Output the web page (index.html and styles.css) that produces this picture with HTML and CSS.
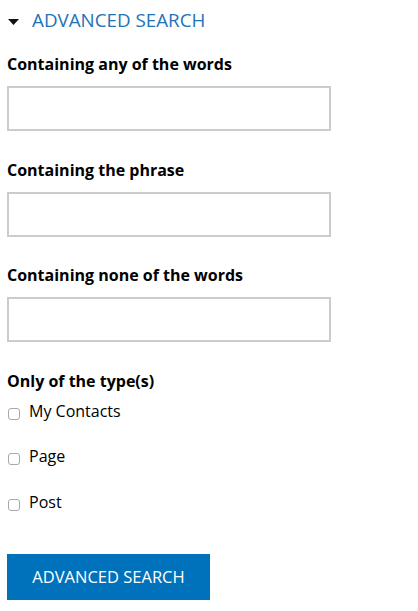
FILE: index.html
```html
<!DOCTYPE html>
<html lang="en">
<head>
<meta charset="utf-8">
<title>Advanced Search</title>
<link rel="stylesheet" href="styles.css">
</head>
<body>
<div class="panel">
  <div class="toggle">
    <svg class="caret" width="11" height="6" viewBox="0 0 11 6"><path d="M0 0H11L5.5 6Z" fill="#111"/></svg>
    <span class="toggle-text">ADVANCED SEARCH</span>
  </div>
  <form class="form">
    <label class="label">Containing any of the words</label>
    <input class="field" type="text">
    <label class="label">Containing the phrase</label>
    <input class="field" type="text">
    <label class="label">Containing none of the words</label>
    <input class="field" type="text">
    <div class="label types-label">Only of the type(s)</div>
    <label class="check"><input type="checkbox" class="box"><span>My Contacts</span></label>
    <label class="check"><input type="checkbox" class="box"><span>Page</span></label>
    <label class="check"><input type="checkbox" class="box"><span>Post</span></label>
    <button type="button" class="btn">ADVANCED SEARCH</button>
  </form>
</div>
</body>
</html>
```
FILE: styles.css
```css
html, body {
  margin: 0;
  padding: 0;
  background: #fff;
}
body {
  font-family: "Open Sans", "Liberation Sans", sans-serif;
  color: #000;
}
.panel {
  padding: 8px 0 0 7px;
}
.toggle {
  display: flex;
  align-items: center;
  height: 24px;
}
.caret {
  margin-left: 1px;
  margin-right: 13px;
  margin-top: 3px;
}
.toggle-text {
  font-size: 18.8px;
  line-height: 24px;
  color: #1f73b7;
}
.form {
  display: flex;
  flex-direction: column;
  align-items: flex-start;
  margin-top: 22px;
}
.label {
  font-size: 16px;
  font-weight: 700;
  line-height: 20px;
  margin-bottom: 12px;
}
.field {
  box-sizing: border-box;
  width: 324px;
  height: 45px;
  border: 2px solid #cccccc;
  border-radius: 0;
  margin: 0 0 28.5px 0;
  padding: 0 8px;
  font: inherit;
  outline: none;
}
.types-label {
  margin-bottom: 9px;
}
.check {
  display: flex;
  align-items: flex-start;
  font-size: 16px;
  line-height: 22px;
  height: 22px;
  margin-bottom: 23.5px;
}
.box {
  appearance: none;
  -webkit-appearance: none;
  box-sizing: border-box;
  width: 12px;
  height: 12px;
  border: 1px solid #a8a8a8;
  border-radius: 3px;
  background: #fff;
  margin: 8px 9px 0 1px;
}
.btn {
  margin-top: 17.5px;
  width: 203px;
  height: 46px;
  border: 0;
  border-radius: 0;
  background: #0072bc;
  color: #fff;
  font-family: "Open Sans", "Liberation Sans", sans-serif;
  font-size: 16.5px;
  padding: 0;
  text-align: center;
}
```
